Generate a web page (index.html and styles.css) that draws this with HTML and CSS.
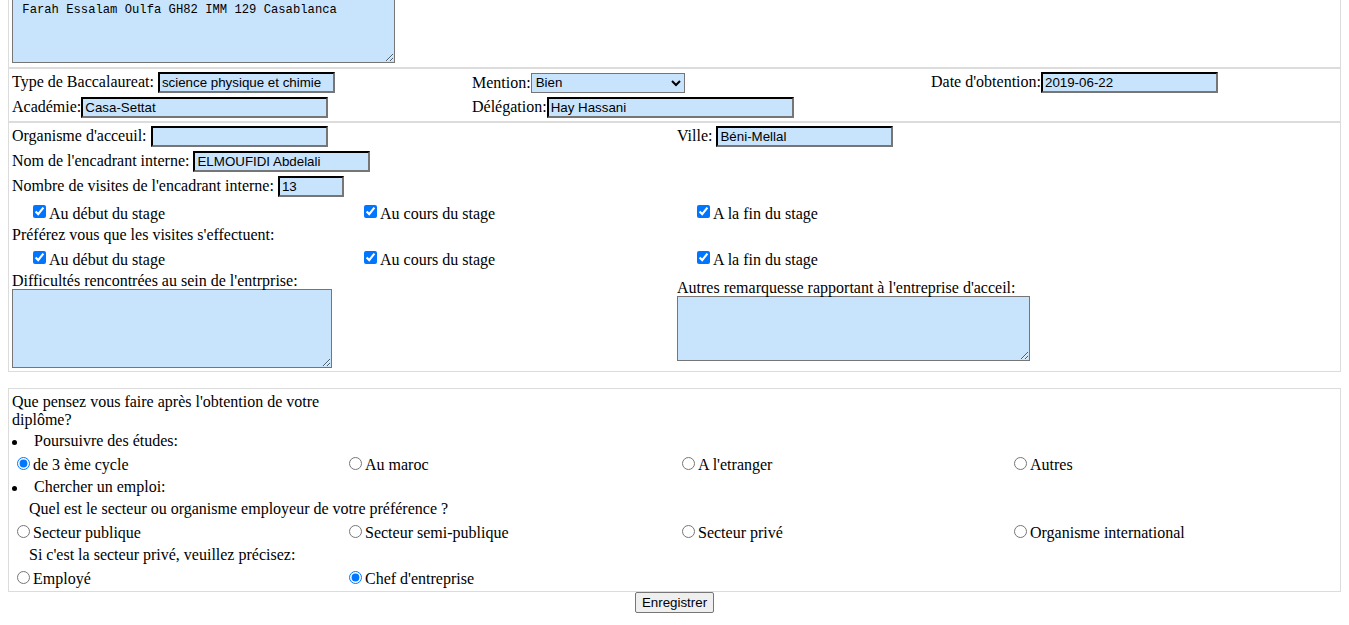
FILE: index.html
```html
<!DOCTYPE html>
<html lang="fr">
<head>
<meta charset="utf-8">
<title>Fiche de stage</title>
<link rel="stylesheet" href="styles.css">
</head>
<body>
<form class="form">
  <section class="box box-address">
    <textarea class="ta ta-address"> Farah Essalam Oulfa GH82 IMM 129 Casablanca</textarea>
  </section>

  <section class="box box-bac">
    <div class="grid3">
      <div class="cell">Type de Baccalaureat: <input class="fld w177" type="text" value="science physique et chimie"></div>
      <div class="cell">Mention:<select class="sel"><option>Bien</option></select></div>
      <div class="cell">Date d'obtention:<input class="fld w177" type="text" value="2019-06-22"></div>
      <div class="cell">Académie:<input class="fld w247" type="text" value="Casa-Settat"></div>
      <div class="cell">Délégation:<input class="fld w247" type="text" value="Hay Hassani"></div>
      <div class="cell"></div>
    </div>
  </section>

  <section class="box box-stage">
    <div class="row-in grid2">
      <div class="cell">Organisme d'acceuil: <input class="fld w177" type="text" value=""></div>
      <div class="cell">Ville: <input class="fld w177" type="text" value="Béni-Mellal"></div>
    </div>
    <div class="row-in">
      <div class="cell">Nom de l'encadrant interne: <input class="fld w177" type="text" value="ELMOUFIDI Abdelali"></div>
    </div>
    <div class="row-in">
      <div class="cell">Nombre de visites de l'encadrant interne: <input class="fld w66" type="text" value="13"></div>
    </div>
    <div class="row-chk chk-a grid-chk">
      <label class="cell"><input type="checkbox" checked>Au début du stage</label>
      <label class="cell"><input type="checkbox" checked>Au cours du stage</label>
      <label class="cell"><input type="checkbox" checked>A la fin du stage</label>
    </div>
    <div class="row-text">Préférez vous que les visites s'effectuent:</div>
    <div class="row-chk chk-b grid-chk">
      <label class="cell"><input type="checkbox" checked>Au début du stage</label>
      <label class="cell"><input type="checkbox" checked>Au cours du stage</label>
      <label class="cell"><input type="checkbox" checked>A la fin du stage</label>
    </div>
    <div class="grid2 row-notes">
      <div class="note">
        <div class="note-label">Difficultés rencontrées au sein de l'entrprise:</div>
        <textarea class="ta ta-diff"></textarea>
      </div>
      <div class="note">
        <div class="note-label">Autres remarquesse rapportant à l'entreprise d'acceil:</div>
        <textarea class="ta ta-other"></textarea>
      </div>
    </div>
  </section>

  <section class="box box-after">
    <div class="question">Que pensez vous faire après l'obtention de votre diplôme?</div>
    <div class="row-bullet row-bullet-first"><span class="dot"></span>Poursuivre des études:</div>
    <div class="row-radio grid4">
      <label class="cell"><input type="radio" name="etudes" checked>de 3 ème cycle</label>
      <label class="cell"><input type="radio" name="lieu">Au maroc</label>
      <label class="cell"><input type="radio" name="lieu">A l'etranger</label>
      <label class="cell"><input type="radio" name="lieu">Autres</label>
    </div>
    <div class="row-bullet"><span class="dot"></span>Chercher un emploi:</div>
    <div class="row-sub">Quel est le secteur ou organisme employeur de votre préférence ?</div>
    <div class="row-radio grid4">
      <label class="cell"><input type="radio" name="secteur">Secteur publique</label>
      <label class="cell"><input type="radio" name="secteur">Secteur semi-publique</label>
      <label class="cell"><input type="radio" name="secteur">Secteur privé</label>
      <label class="cell"><input type="radio" name="secteur">Organisme international</label>
    </div>
    <div class="row-sub">Si c'est la secteur privé, veuillez précisez:</div>
    <div class="row-radio grid4">
      <label class="cell"><input type="radio" name="statut">Employé</label>
      <label class="cell"><input type="radio" name="statut" checked>Chef d'entreprise</label>
    </div>
  </section>

  <div class="actions">
    <button class="btn" type="button">Enregistrer</button>
  </div>
</form>
</body>
</html>
```

FILE: styles.css
```css
html, body {
  background: #ffffff;
}

body {
  margin: 0 8px 8px 8px;
  font-family: "Liberation Serif", "Times New Roman", serif;
  font-size: 16px;
  line-height: 18px;
  color: #000000;
}

.form {
  display: flex;
  flex-direction: column;
}

.box {
  border: 1px solid #dcdcdc;
  padding: 3px;
}

.box-address {
  margin-top: -6px;
  padding-bottom: 4px;
}

.box-bac {
  padding: 3px;
}

.box-stage {
  padding: 1px 3px 3px 3px;
}

.box-after {
  margin-top: 16px;
  padding: 3px 3px 1px 3px;
}

/* form fields */
.fld {
  box-sizing: border-box;
  height: 21px;
  margin: 0;
  padding: 1px 2px;
  border: 2px inset #767676;
  border-top-color: #222222;
  border-left-color: #222222;
  background-color: #c8e4fd;
  font-family: "Liberation Sans", Arial, sans-serif;
  font-size: 13.333px;
  color: #000000;
}

.w177 { width: 177px; }
.w247 { width: 247px; }
.w66 { width: 66px; }

.sel {
  box-sizing: border-box;
  width: 154px;
  height: 20px;
  margin: 0;
  background-color: #c8e4fd;
  border: 1px solid #767676;
  font-family: "Liberation Sans", Arial, sans-serif;
  font-size: 13.333px;
  color: #000000;
}

.ta {
  display: block;
  box-sizing: border-box;
  margin: 0;
  padding: 2px;
  border: 1px solid #767676;
  background-color: #c8e4fd;
  font-family: "Liberation Mono", "DejaVu Sans Mono", monospace;
  font-size: 12.2px;
  color: #000000;
}

.ta-address {
  width: 383px;
  height: 65px;
  padding-top: 4px;
}

.ta-diff {
  width: 320px;
  height: 79px;
}

.ta-other {
  width: 353px;
  height: 65px;
}

/* grids */
.grid3 {
  display: grid;
  grid-template-columns: 460px 459px 1fr;
  grid-auto-rows: 21px;
  row-gap: 4px;
  align-items: center;
}

.grid2 {
  display: grid;
  grid-template-columns: 665px 1fr;
  align-items: center;
}

.grid-chk {
  display: grid;
  grid-template-columns: 331px 333px 1fr;
  padding-left: 17px;
  align-items: center;
}

.grid4 {
  display: grid;
  grid-template-columns: 332px 333px 332px 1fr;
  align-items: center;
}

.cell {
  white-space: nowrap;
}

.row-in {
  height: 25px;
  display: flex;
  align-items: center;
}

.row-in.grid2 {
  display: grid;
}

.row-chk {
  box-sizing: border-box;
}

.chk-a {
  height: 26px;
  padding-top: 1px;
}

.chk-b {
  height: 28px;
  padding-top: 3px;
}

.row-text {
  box-sizing: border-box;
  height: 18px;
  padding-top: 1px;
}

input[type="checkbox"] {
  margin: 3px 3px 3px 4px;
  vertical-align: 1px;
}

input[type="radio"] {
  margin: 3px 3px 0 5px;
  vertical-align: 0;
}

.row-notes {
  align-items: center;
}

.note-label {
  box-sizing: border-box;
  height: 18px;
  padding-top: 1px;
  white-space: nowrap;
}

/* après diplôme */
.question {
  width: 320px;
  line-height: 18px;
  padding-top: 1px;
}

.row-bullet {
  display: flex;
  align-items: center;
  height: 22px;
}

.row-bullet-first {
  height: 23px;
}

.dot {
  display: inline-block;
  width: 5px;
  height: 5px;
  border-radius: 50%;
  background: #000000;
  margin: 3px 17px 0 0;
}

.row-radio {
  height: 24px;
}

.row-sub {
  height: 22px;
  display: flex;
  align-items: center;
  padding-left: 17px;
}

.actions {
  display: flex;
  justify-content: center;
}

.btn {
  box-sizing: border-box;
  height: 21px;
  margin: 0;
  padding: 1px 6px;
  font-family: "Liberation Sans", Arial, sans-serif;
  font-size: 13.333px;
  color: #000000;
  background: #efefef;
  border: 1px solid #767676;
  border-radius: 2px;
}
```
